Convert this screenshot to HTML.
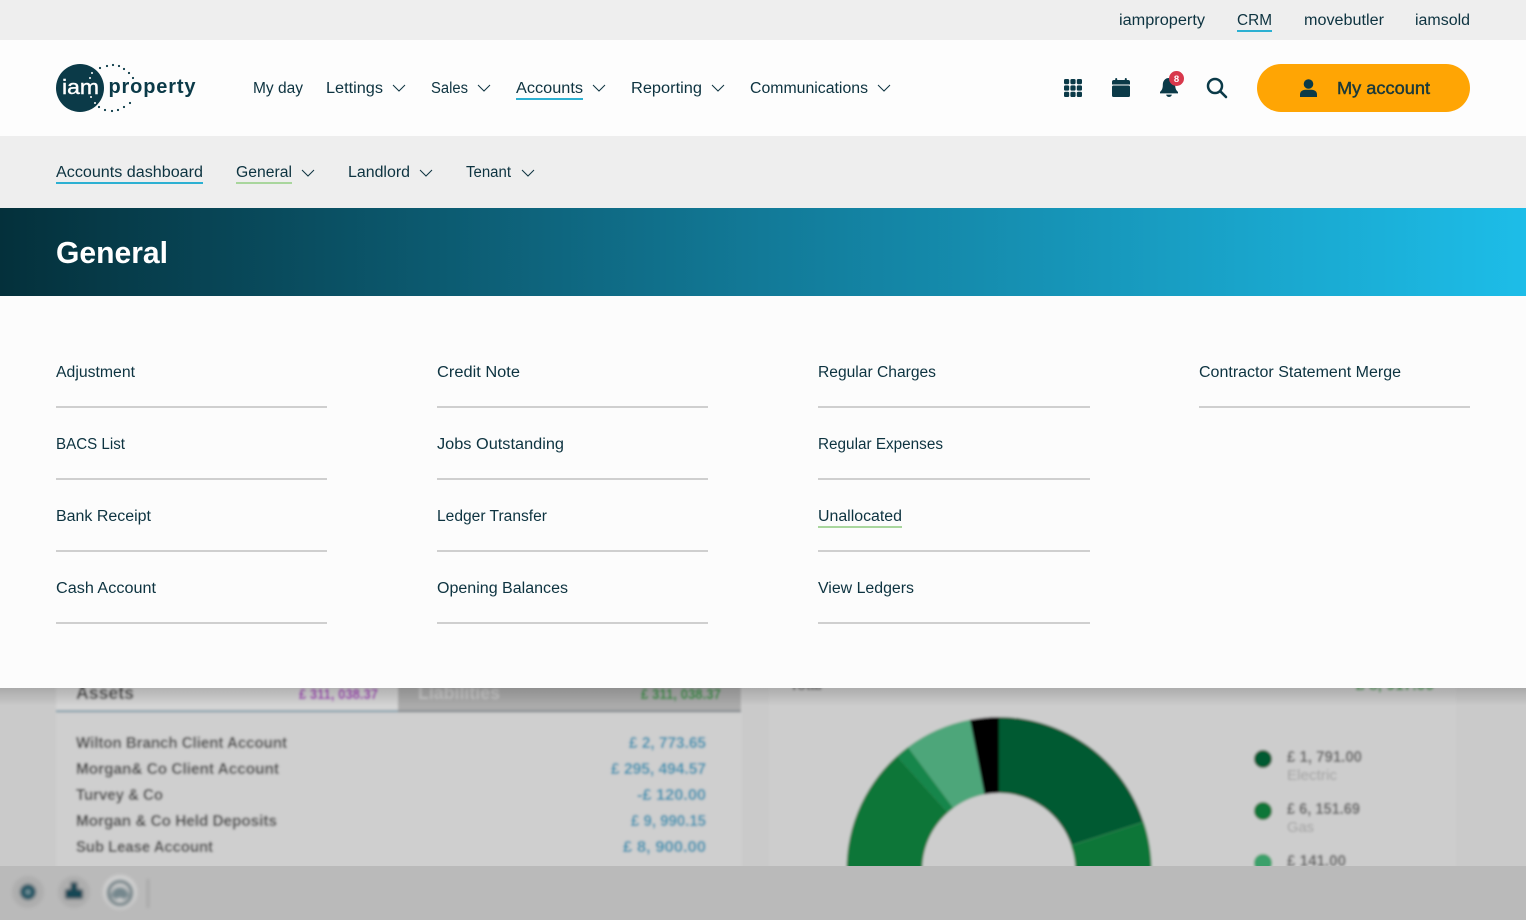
<!DOCTYPE html>
<html lang="en">
<head>
<meta charset="utf-8">
<title>General - Accounts</title>
<style>
html,body{margin:0;padding:0;background:#cdcdcd;width:1526px;height:920px;overflow:hidden}
svg{display:block}
text{font-family:"Liberation Sans",sans-serif;white-space:pre}
.t{fill:#0d3340;font-size:15.5px}
.c{fill:none;stroke:#0d3340;stroke-width:1}
.l{fill:#cfcfcf}
.b{fill:#3c3c3c;font-size:15.5px;font-weight:bold}
.a{fill:#2a90b0;font-size:16px;font-weight:bold}
.g{fill:#5e5e5e;font-size:16px;font-weight:bold}
</style>
</head>
<body>
<svg xmlns="http://www.w3.org/2000/svg" width="1526" height="920" viewBox="0 0 1526 920">
<defs>
<linearGradient id="hero" x1="0" x2="1" y1="0" y2="0">
<stop offset="0" stop-color="#04303b"/>
<stop offset=".5" stop-color="#127a98"/>
<stop offset="1" stop-color="#1dbde8"/>
</linearGradient>
<linearGradient id="sh" x1="0" x2="0" y1="0" y2="1">
<stop offset="0" stop-color="#000" stop-opacity=".16"/>
<stop offset="1" stop-color="#000" stop-opacity="0"/>
</linearGradient>
<filter id="blur" x="-5%" y="-5%" width="110%" height="110%"><feGaussianBlur stdDeviation="1.25"/></filter>
<filter id="blur2" x="-20%" y="-20%" width="140%" height="140%"><feGaussianBlur stdDeviation="1.8"/></filter>
</defs>

<!-- blurred page behind -->
<rect x="0" y="680" width="1526" height="240" fill="#cacaca"/>
<g filter="url(#blur)">
<rect x="56" y="670" width="686" height="210" fill="#cfcfcf"/>
<rect x="769" y="670" width="687" height="210" fill="#cdcdcd"/>
<rect x="56" y="670" width="342" height="40" fill="#d4d4d4"/>
<rect x="398" y="670" width="343" height="40" fill="#ababab"/>
<rect x="56" y="710" width="342" height="2.5" fill="#8fa5b0"/>
<rect x="398" y="710" width="343" height="2.5" fill="#8d9296"/>
<text x="76" y="699" class="b" style="font-size:18px" textLength="58" lengthAdjust="spacingAndGlyphs">Assets</text>
<text x="299" y="699" fill="#a010b8" font-size="15" font-weight="bold" textLength="79" lengthAdjust="spacingAndGlyphs">£ 311, 038.37</text>
<text x="418" y="699" fill="#c8c8c8" font-size="18" font-weight="bold" textLength="82" lengthAdjust="spacingAndGlyphs">Liabilities</text>
<text x="641" y="699" fill="#109030" font-size="15" font-weight="bold" textLength="80" lengthAdjust="spacingAndGlyphs">£ 311, 038.37</text>
<text x="790" y="690" fill="#666" font-size="14" font-weight="bold" textLength="32" lengthAdjust="spacingAndGlyphs">Total</text>
<text x="1356" y="690" fill="#1f9a38" font-size="15" font-weight="bold" textLength="78" lengthAdjust="spacingAndGlyphs">£ 8, 917.00</text>

<text x="76" y="748" class="b" textLength="211" lengthAdjust="spacingAndGlyphs">Wilton Branch Client Account</text>
<text x="76" y="774" class="b" textLength="203" lengthAdjust="spacingAndGlyphs">Morgan&amp; Co Client Account</text>
<text x="76" y="800" class="b" textLength="87" lengthAdjust="spacingAndGlyphs">Turvey &amp; Co</text>
<text x="76" y="826" class="b" textLength="201" lengthAdjust="spacingAndGlyphs">Morgan &amp; Co Held Deposits</text>
<text x="76" y="852" class="b" textLength="137" lengthAdjust="spacingAndGlyphs">Sub Lease Account</text>
<text x="629" y="748" class="a" textLength="77" lengthAdjust="spacingAndGlyphs">£ 2, 773.65</text>
<text x="611" y="774" class="a" textLength="95" lengthAdjust="spacingAndGlyphs">£ 295, 494.57</text>
<text x="637" y="800" class="a" textLength="69" lengthAdjust="spacingAndGlyphs">-£ 120.00</text>
<text x="631" y="826" class="a" textLength="75" lengthAdjust="spacingAndGlyphs">£ 9, 990.15</text>
<text x="623" y="852" class="a" textLength="83" lengthAdjust="spacingAndGlyphs">£ 8, 900.00</text>

<!-- donut: centre 999,869 R152 r76 -->
<path d="M999 717 A152 152 0 0 1 1143.5 822 L1071.3 845.5 A76 76 0 0 0 999 793 Z" fill="#035a30"/>
<path d="M1143.5 822 A152 152 0 0 1 1151 880 L1075 880 A76 76 0 0 0 1071.3 845.5 Z" fill="#0a7638" stroke="#3b9461" stroke-width=".6"/>
<path d="M847 880 A152 152 0 0 1 897 756 L948 812.5 A76 76 0 0 0 923 880 Z" fill="#0a7638"/>
<path d="M897 756 A152 152 0 0 1 908 747 L953.5 808 A76 76 0 0 0 948 812.5 Z" fill="#14864b"/>
<path d="M908 747 A152 152 0 0 1 970 719.8 L984.5 794.4 A76 76 0 0 0 953.5 808 Z" fill="#4ea67a"/>
<path d="M970 719.8 A152 152 0 0 1 999 717 L999 793 A76 76 0 0 0 984.5 794.4 Z" fill="#000"/>

<circle cx="1263" cy="759" r="9" fill="#035a30"/>
<circle cx="1263" cy="811" r="9" fill="#0a7638"/>
<circle cx="1263" cy="863" r="9" fill="#3aa06a"/>
<text x="1287" y="762" class="g" textLength="75" lengthAdjust="spacingAndGlyphs">£ 1, 791.00</text>
<text x="1287" y="780" fill="#a0a0a0" font-size="15" textLength="50" lengthAdjust="spacingAndGlyphs">Electric</text>
<text x="1287" y="814" class="g" textLength="73" lengthAdjust="spacingAndGlyphs">£ 6, 151.69</text>
<text x="1287" y="832" fill="#a0a0a0" font-size="15" textLength="27" lengthAdjust="spacingAndGlyphs">Gas</text>
<text x="1287" y="866" class="g" textLength="59" lengthAdjust="spacingAndGlyphs">£ 141.00</text>
</g>
<rect x="0" y="688" width="1526" height="18" fill="url(#sh)"/>

<!-- bottom bar -->
<rect x="0" y="866" width="1526" height="54" fill="#bababa"/>
<g filter="url(#blur2)">
<circle cx="28" cy="892" r="16" fill="#aeaeae"/>
<circle cx="28" cy="892" r="8" fill="#1f5564"/>
<circle cx="28" cy="892" r="2.4" fill="#7e9aa2"/>
<circle cx="74" cy="892" r="16" fill="#aeaeae"/>
<rect x="65" y="889" width="18" height="10" rx="2" fill="#174755"/>
<rect x="70.5" y="882" width="7" height="8" fill="#174755"/>
<circle cx="120" cy="892" r="17" fill="#d2d2d2"/>
<circle cx="120" cy="893" r="11.5" fill="none" stroke="#66797f" stroke-width="3.5"/>
<path d="M111 896 A9 9 0 0 1 129 896 L124 900 A5 5 0 0 0 116 900 Z" fill="#76888e"/>
<rect x="147" y="879" width="2" height="29" fill="#a0a0a0"/>
</g>

<!-- top bar -->
<rect x="0" y="0" width="1526" height="40" fill="#eeeeee"/>
<text x="1119" y="25" class="t" textLength="86" lengthAdjust="spacingAndGlyphs">iamproperty</text>
<text x="1237" y="25" class="t" textLength="35" lengthAdjust="spacingAndGlyphs">CRM</text>
<rect x="1237" y="30" width="35" height="2" fill="#2cb0d2"/>
<text x="1304" y="25" class="t" textLength="80" lengthAdjust="spacingAndGlyphs">movebutler</text>
<text x="1415" y="25" class="t" textLength="55" lengthAdjust="spacingAndGlyphs">iamsold</text>

<!-- nav -->
<rect x="0" y="40" width="1526" height="96" fill="#fdfdfd"/>
<circle cx="80" cy="88" r="24" fill="#0b3a48"/>
<text x="62" y="94" fill="#fff" stroke="#fff" stroke-width=".4" font-size="20" textLength="37" lengthAdjust="spacingAndGlyphs">iam</text>
<text x="108.5" y="93" fill="#0b3a48" font-size="20" font-weight="bold" textLength="87" lengthAdjust="spacing">property</text>
<g fill="#0b3a48">
<circle cx="100" cy="68" r="1.1"/><circle cx="107" cy="66" r="1.1"/><circle cx="113" cy="65" r="1.1"/><circle cx="119" cy="66" r="1.1"/><circle cx="124" cy="69" r="1.1"/><circle cx="129" cy="73" r="1.1"/><circle cx="133" cy="78" r="1.1"/>
<circle cx="130" cy="103" r="1.1"/><circle cx="124" cy="107" r="1.1"/><circle cx="118" cy="110" r="1.1"/><circle cx="112" cy="111" r="1.1"/><circle cx="105" cy="110" r="1.1"/><circle cx="99" cy="107" r="1.1"/>
</g>
<g fill="#fff">
<circle cx="92" cy="73" r="1"/><circle cx="90" cy="78" r="1"/><circle cx="91" cy="97" r="1"/><circle cx="95" cy="103" r="1"/>
</g>

<text x="253" y="93" class="t" textLength="50" lengthAdjust="spacingAndGlyphs">My day</text>
<text x="326" y="93" class="t" textLength="57" lengthAdjust="spacingAndGlyphs">Lettings</text>
<path class="c" d="M393 85 L399 91 L405 85"/>
<text x="431" y="93" class="t" textLength="37" lengthAdjust="spacingAndGlyphs">Sales</text>
<path class="c" d="M478 85 L484 91 L490 85"/>
<text x="516" y="93" class="t" textLength="67" lengthAdjust="spacingAndGlyphs">Accounts</text>
<rect x="516" y="98" width="67" height="2" fill="#2cb0d2"/>
<path class="c" d="M593 85 L599 91 L605 85"/>
<text x="631" y="93" class="t" textLength="71" lengthAdjust="spacingAndGlyphs">Reporting</text>
<path class="c" d="M712 85 L718 91 L724 85"/>
<text x="750" y="93" class="t" textLength="118" lengthAdjust="spacingAndGlyphs">Communications</text>
<path class="c" d="M878 85 L884 91 L890 85"/>

<!-- icons -->
<g fill="#0b3a48">
<rect x="1064" y="79" width="5.2" height="5.2" rx="1.4"/><rect x="1070.4" y="79" width="5.2" height="5.2" rx="1.4"/><rect x="1076.8" y="79" width="5.2" height="5.2" rx="1.4"/>
<rect x="1064" y="85.4" width="5.2" height="5.2" rx="1.4"/><rect x="1070.4" y="85.4" width="5.2" height="5.2" rx="1.4"/><rect x="1076.8" y="85.4" width="5.2" height="5.2" rx="1.4"/>
<rect x="1064" y="91.8" width="5.2" height="5.2" rx="1.4"/><rect x="1070.4" y="91.8" width="5.2" height="5.2" rx="1.4"/><rect x="1076.8" y="91.8" width="5.2" height="5.2" rx="1.4"/>
<path d="M1112 82 a2 2 0 0 1 2 -2 h14 a2 2 0 0 1 2 2 v2.5 h-18 z"/>
<rect x="1112" y="85.5" width="18" height="11.5" rx="1.5"/>
<rect x="1115.2" y="78" width="2" height="4" rx="1"/><rect x="1124.8" y="78" width="2" height="4" rx="1"/>
<path d="M1169 78 c-4.2 0 -6.2 3.2 -6.2 7 c0 4 -1.2 5.4 -2.8 7 v1.4 h18 v-1.4 c-1.6 -1.6 -2.8 -3 -2.8 -7 c0 -3.8 -2 -7 -6.2 -7 z"/>
<path d="M1166.2 94.6 h5.6 a2.8 2.4 0 0 1 -5.6 0 z"/>
</g>
<circle cx="1176.5" cy="78.5" r="7.5" fill="#d8384c"/>
<text x="1176.5" y="82" fill="#fff" font-size="9.5" font-weight="bold" text-anchor="middle">8</text>
<circle cx="1215" cy="86" r="7" fill="none" stroke="#0b3a48" stroke-width="2.5"/>
<path d="M1220.2 91.2 L1226 97" fill="none" stroke="#0b3a48" stroke-width="2.6" stroke-linecap="round"/>

<rect x="1257" y="64" width="213" height="48" rx="24" fill="#ffa504"/>
<circle cx="1308.5" cy="84" r="4.8" fill="#0b3a48"/>
<path d="M1300 97 v-2.5 c0 -3 2.5 -4.7 5.5 -4.7 h6 c3 0 5.5 1.7 5.5 4.7 v2.5 z" fill="#0b3a48"/>
<text x="1337" y="94" fill="#1b3a3a" stroke="#1b3a3a" stroke-width=".45" font-size="17.5" textLength="93" lengthAdjust="spacingAndGlyphs">My account</text>

<!-- sub nav -->
<rect x="0" y="136" width="1526" height="72" fill="#eeeeee"/>
<text x="56" y="177" class="t" textLength="147" lengthAdjust="spacingAndGlyphs">Accounts dashboard</text>
<rect x="56" y="182" width="147" height="2" fill="#2cb0d2"/>
<text x="236" y="177" class="t" textLength="56" lengthAdjust="spacingAndGlyphs">General</text>
<rect x="236" y="182" width="56" height="2" fill="#a9d69d"/>
<path class="c" d="M302 170 L308 176 L314 170"/>
<text x="348" y="177" class="t" textLength="62" lengthAdjust="spacingAndGlyphs">Landlord</text>
<path class="c" d="M420 170 L426 176 L432 170"/>
<text x="466" y="177" class="t" textLength="45" lengthAdjust="spacingAndGlyphs">Tenant</text>
<path class="c" d="M522 170 L528 176 L534 170"/>

<!-- hero -->
<rect x="0" y="208" width="1526" height="88" fill="url(#hero)"/>
<text x="56" y="263" fill="#fff" font-size="31" font-weight="bold" textLength="112" lengthAdjust="spacingAndGlyphs">General</text>

<!-- mega menu panel -->
<rect x="0" y="296" width="1526" height="392" fill="#fcfcfc"/>

<text x="56" y="377" class="t" textLength="79" lengthAdjust="spacingAndGlyphs">Adjustment</text>
<rect x="56" y="406" width="271" height="2" class="l"/>
<text x="56" y="449" class="t" textLength="69" lengthAdjust="spacingAndGlyphs">BACS List</text>
<rect x="56" y="478" width="271" height="2" class="l"/>
<text x="56" y="521" class="t" textLength="95" lengthAdjust="spacingAndGlyphs">Bank Receipt</text>
<rect x="56" y="550" width="271" height="2" class="l"/>
<text x="56" y="593" class="t" textLength="100" lengthAdjust="spacingAndGlyphs">Cash Account</text>
<rect x="56" y="622" width="271" height="2" class="l"/>

<text x="437" y="377" class="t" textLength="83" lengthAdjust="spacingAndGlyphs">Credit Note</text>
<rect x="437" y="406" width="271" height="2" class="l"/>
<text x="437" y="449" class="t" textLength="127" lengthAdjust="spacingAndGlyphs">Jobs Outstanding</text>
<rect x="437" y="478" width="271" height="2" class="l"/>
<text x="437" y="521" class="t" textLength="110" lengthAdjust="spacingAndGlyphs">Ledger Transfer</text>
<rect x="437" y="550" width="271" height="2" class="l"/>
<text x="437" y="593" class="t" textLength="131" lengthAdjust="spacingAndGlyphs">Opening Balances</text>
<rect x="437" y="622" width="271" height="2" class="l"/>

<text x="818" y="377" class="t" textLength="118" lengthAdjust="spacingAndGlyphs">Regular Charges</text>
<rect x="818" y="406" width="272" height="2" class="l"/>
<text x="818" y="449" class="t" textLength="125" lengthAdjust="spacingAndGlyphs">Regular Expenses</text>
<rect x="818" y="478" width="272" height="2" class="l"/>
<text x="818" y="521" class="t" textLength="84" lengthAdjust="spacingAndGlyphs">Unallocated</text>
<rect x="818" y="526" width="84" height="2" fill="#a9d69d"/>
<rect x="818" y="550" width="272" height="2" class="l"/>
<text x="818" y="593" class="t" textLength="96" lengthAdjust="spacingAndGlyphs">View Ledgers</text>
<rect x="818" y="622" width="272" height="2" class="l"/>

<text x="1199" y="377" class="t" textLength="202" lengthAdjust="spacingAndGlyphs">Contractor Statement Merge</text>
<rect x="1199" y="406" width="271" height="2" class="l"/>
</svg>
</body>
</html>
